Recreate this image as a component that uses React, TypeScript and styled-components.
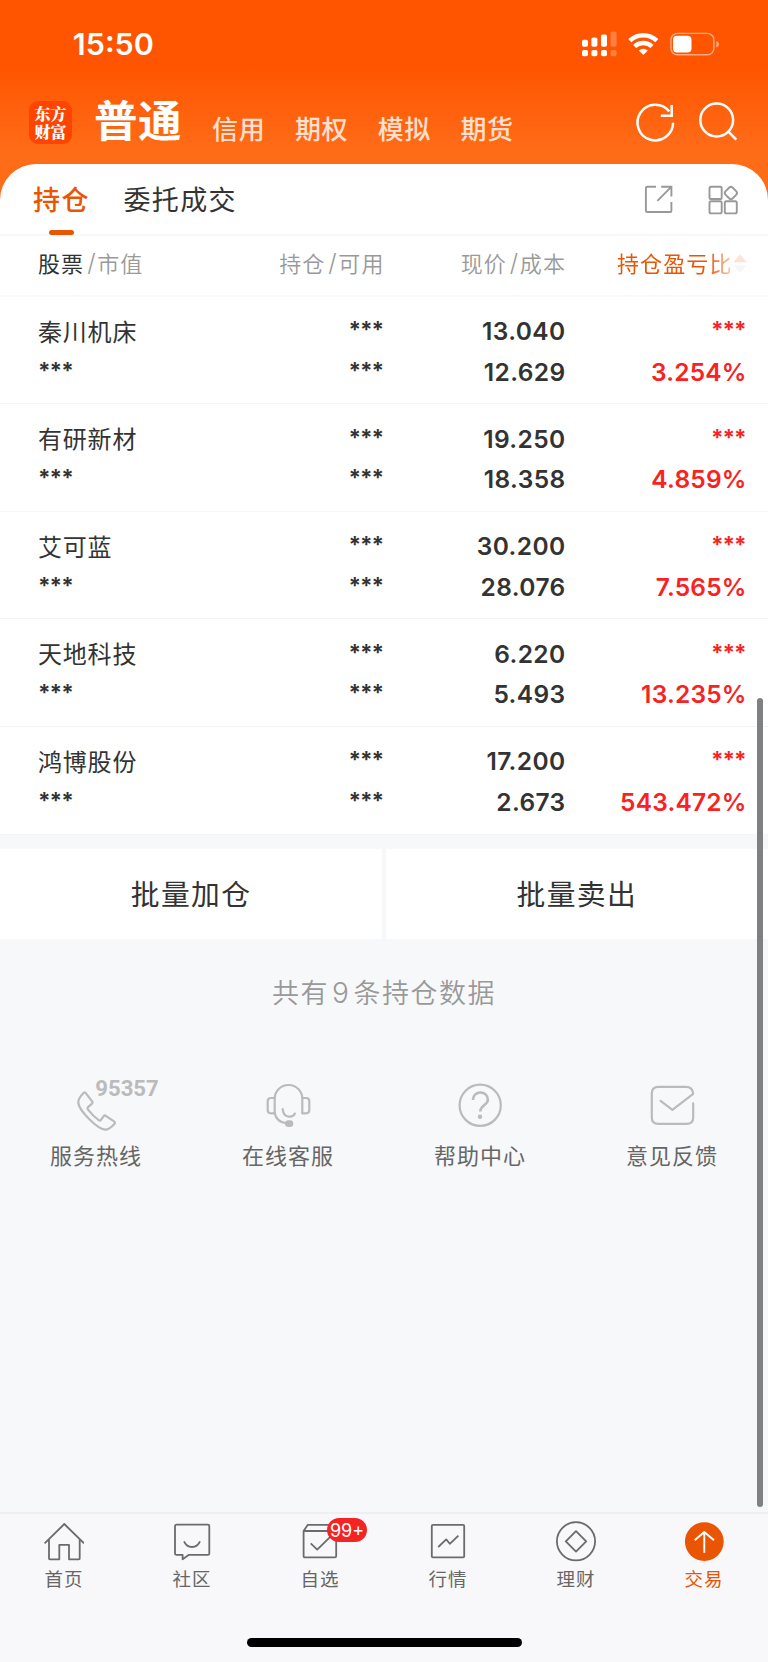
import React from 'react';
import styled, { createGlobalStyle } from 'styled-components';

const CJK = '"Noto Sans CJK SC", sans-serif';
const LATIN = 'Inter, "Noto Sans CJK SC", sans-serif';
const ORANGE = '#ea5504';

const GlobalStyle = createGlobalStyle`
  * { box-sizing: border-box; }
  body { margin: 0; background: #f7f8fa; font-family: ${CJK}; color: #333; }
`;

const Screen = styled.div`
  position: relative;
  display: flex;
  flex-direction: column;
  width: 768px;
  height: 1662px;
  overflow: hidden;
  background: linear-gradient(180deg, #ff5500 0, #ff5500 68px, #ff6c18 150px, #ff6c18 205px, #f7f8fa 205px);
`;

const StatusBar = styled.div`
  display: flex;
  align-items: center;
  justify-content: space-between;
  height: 88px;
  padding: 0 48px 0 72.8px;
`;

const Clock = styled.span`
  font: 600 30.5px/36px ${LATIN};
  color: #fff;
`;

const Header = styled.header`
  display: flex;
  height: 75.5px;
  padding: 13px 28px 0 29px;
`;

const Logo = styled.div`
  width: 43px;
  height: 43px;
  padding: 4px 5px 0 5.5px;
  border-radius: 9px;
  background: #ff4400;
  color: #fff;
  font: 900 16px/17.5px "Noto Serif CJK SC", ${CJK};
  word-break: break-all;
`;

const Market = styled.span<{ $active?: boolean }>`
  font-family: ${CJK};
  font-weight: ${p => (p.$active ? 700 : 500)};
  font-size: ${p => (p.$active ? 43.5 : 26)}px;
  letter-spacing: ${p => (p.$active ? 0.5 : 0.6)}px;
  line-height: 44px;
  color: ${p => (p.$active ? '#fff' : '#ffe0d0')};
`;

const Markets = styled.nav`
  display: flex;
  gap: 29.6px;
  flex: 1;
  margin-left: 22px;

  ${Market} { margin-top: 4.5px; }
  ${Market}:first-child { margin-top: -4px; margin-right: 0.5px; }
`;

const HeaderIcons = styled.div`
  display: flex;
  width: 108px;
`;

const Card = styled.main`
  background: #fff;
  border-radius: 36px 36px 0 0;
`;

const Tabs = styled.div`
  display: flex;
  height: 72.5px;
  padding: 0 28px 0 33px;
  border-bottom: 2px solid #f8f8f8;
`;

const Tab = styled.div<{ $active?: boolean }>`
  display: flex;
  flex-direction: column;
  align-items: center;
  justify-content: space-between;
  height: 71.3px;
  padding-top: 15px;
  margin-right: 33.6px;
  font-size: 27px;
  letter-spacing: 1.4px;
  line-height: 40px;
  font-weight: ${p => (p.$active ? 500 : 400)};
  color: ${p => (p.$active ? ORANGE : '#333')};
`;

const Underline = styled.i`
  width: 25px;
  height: 5px;
  border-radius: 2.5px;
  background: ${ORANGE};
`;

const Tools = styled.div`
  margin-left: auto;
  padding-top: 17px;
`;

const Row = styled.div`
  display: grid;
  grid-template-columns: 160px 185.5px 181.5px 181px;
  height: 107.6px;
  padding: 14.4px 0 0 38px;
  border-bottom: 1.6px solid #f4f5f6;
`;

const HeadRow = styled(Row)`
  height: 60.7px;
  padding-top: 10.2px;
  border-bottom: 2px solid #f8f8f8;
`;

const HeadCell = styled.div<{ $right?: boolean }>`
  display: flex;
  justify-content: ${p => (p.$right ? 'flex-end' : 'flex-start')};
  font-size: 22px;
  letter-spacing: 1.1px;
  line-height: 32px;
  font-weight: 350;
  color: #999;
  white-space: nowrap;
  margin-right: ${p => (p.$right ? '-1px' : '0')};

  b { font-weight: 400; color: #333; }
  i { font: 300 24px/33px ${LATIN}; margin: 0 0.5px 0 3px; }
`;

const SortHead = styled(HeadCell)`
  gap: 0.5px;
  color: ${ORANGE};
  font-weight: 400;

  span {
    mask-image: linear-gradient(90deg, #000 78%, rgba(0, 0, 0, 0.25) 100%);
  }
`;

const Cell = styled.div<{ $red?: boolean; $left?: boolean }>`
  display: flex;
  flex-direction: column;
  align-items: ${p => (p.$left ? 'flex-start' : 'flex-end')};
  color: ${p => (p.$red ? '#f92222' : '#333')};
`;

const Value = styled.span<{ $tight?: boolean }>`
  height: 40.6px;
  font: 600 24.5px/40.6px ${LATIN};
  letter-spacing: ${p => (p.$tight ? 0.2 : 0.4)}px;
  margin-right: -0.6px;
`;

const Name = styled.span`
  height: 40.6px;
  font: 400 24px/32px ${CJK};
  letter-spacing: 0.8px;
  padding-top: 3.6px;
`;

const Mask = styled(Value)`
  font-size: 22.5px;
  font-weight: 650;
  line-height: 38px;
  letter-spacing: -1px;
  margin-right: 0.3px;
`;

const BatchBar = styled.div`
  display: grid;
  grid-template-columns: 1fr 1fr;
  gap: 3.5px;
  padding-top: 14.3px;
  background: #f7f8fa;
`;

const BatchButton = styled.button`
  height: 89.7px;
  padding: 0 0 1px;
  border: 0;
  background: #fff;
  color: #333;
  font: 400 28.8px/40px ${CJK};
  letter-spacing: 1.4px;
`;

const Summary = styled.p`
  margin: 0;
  padding-top: 33.5px;
  text-align: center;
  font-size: 27px;
  line-height: 40px;
  letter-spacing: 1.5px;
  font-weight: 350;
  color: #999;

  span { font-family: ${LATIN}; font-size: 28px; margin: 0 3px; }
`;

const Body = styled.section`
  flex: 1;
  background: #f7f8fa;
`;

const Services = styled.div`
  display: grid;
  grid-template-columns: repeat(4, 1fr);
  padding-top: 66.5px;
`;

const Service = styled.div`
  display: flex;
  flex-direction: column;
  align-items: center;
  gap: 6px;
  color: #666;
  font-size: 22px;
  line-height: 32px;
  letter-spacing: 1px;

  svg { overflow: visible; }
`;

const TabBar = styled.footer`
  display: grid;
  grid-template-columns: repeat(6, 1fr);
  height: 150px;
  padding-top: 6px;
  border-top: 2px solid #eeeff1;
  background: #f8f8fb;
`;

const TabItem = styled.div<{ $active?: boolean }>`
  position: relative;
  display: flex;
  flex-direction: column;
  align-items: center;
  color: ${p => (p.$active ? ORANGE : '#666')};
  font-size: 18.5px;
  line-height: 28px;
  letter-spacing: 1px;

  svg { margin-bottom: 1.5px; }
`;

const Badge = styled.span`
  position: absolute;
  left: 71px;
  top: -2px;
  width: 40px;
  height: 23.5px;
  border-radius: 12px;
  background: #f52424;
  color: #fff;
  text-align: center;
  letter-spacing: 0;
  font: 400 18px/25px ${LATIN};
`;

const ScrollThumb = styled.div`
  position: absolute;
  left: 757px;
  top: 698px;
  width: 5.5px;
  height: 809px;
  border-radius: 3px;
  background: #7f8082;
`;

const HomeIndicator = styled.div`
  position: absolute;
  left: 247px;
  bottom: 15px;
  width: 274.5px;
  height: 9px;
  border-radius: 5px;
  background: #000;
`;

const StatusIcons = () => (
  <svg width="140" height="30" viewBox="580 28.5 140 30" fill="#fff">
    <rect x="582" y="39.3" width="6" height="7" rx="1.8" />
    <rect x="591.4" y="37" width="6" height="9.3" rx="1.8" />
    <rect x="601" y="34" width="6" height="12.3" rx="1.8" />
    <rect x="610.6" y="31" width="6" height="15.3" rx="1.8" opacity=".25" />
    <rect x="582" y="49.4" width="6" height="6.4" rx="1.8" />
    <rect x="591.4" y="49.4" width="6" height="6.4" rx="1.8" />
    <rect x="601" y="49.4" width="6" height="6.4" rx="1.8" />
    <rect x="610.6" y="49.4" width="6" height="6.4" rx="1.8" opacity=".25" />
    <g fill="none" stroke="#fff" strokeWidth="4.4">
      <path d="M629.8 40.2 A19.5 19.5 0 0 1 656.8 40.2" />
      <path d="M634.6 46 A12.6 12.6 0 0 1 652 46" />
    </g>
    <path d="M643.3 54.6 L638.8 50 Q643.3 46.6 647.8 50 Z" />
    <rect x="670.9" y="32.9" width="43" height="21.4" rx="6.5" fill="none" stroke="#fff" strokeWidth="1.4" opacity=".5" />
    <rect x="673" y="35.2" width="18.5" height="16.7" rx="4" />
    <path d="M716.3 40.5 Q719 41.6 719 43.8 Q719 46 716.3 47.1 Z" opacity=".5" />
  </svg>
);

const RefreshSearch = () => (
  <svg width="108" height="44" viewBox="632 101 108 44" fill="none" stroke="#fff" strokeWidth="2.5">
    <path d="M673.1 122.8 A17.8 17.8 0 1 1 669.3 111.6" />
    <path d="M671.7 105 V115.7 H660.8" />
    <circle cx="716.7" cy="120" r="16.4" />
    <path d="M728.3 131.6 L736.3 139.6" />
  </svg>
);

const ToolIcons = () => (
  <svg width="100" height="34" viewBox="640 181 100 34" fill="none" stroke="#999" strokeWidth="1.9">
    <path d="M656 186.8 H647.2 Q645.9 186.8 645.9 188.1 V210.7 Q645.9 212 647.2 212 H670.1 Q671.4 212 671.4 210.7 V202" />
    <path d="M661.2 186.8 H671.4 V196.6 M671 187.2 L657.4 200.8" />
    <rect x="709.5" y="186.8" width="12.2" height="12.2" rx="1.6" />
    <rect x="709.5" y="201.2" width="12.2" height="12.2" rx="1.6" />
    <rect x="724.8" y="201.2" width="12" height="12.2" rx="1.6" />
    <rect x="725.9" y="188" width="10" height="10" rx="2.6" transform="rotate(45 730.9 193)" />
  </svg>
);

const SortIcon = () => (
  <svg width="14" height="32" viewBox="0 0 14 32">
    <path d="M0.3 16.2 L7 8.5 L13.7 16.2 Z" fill="#fde3d6" />
    <path d="M0.3 19.2 L7 26.8 L13.7 19.2 Z" fill="#f5f6f7" />
  </svg>
);

const serviceStroke = {
  fill: 'none', stroke: '#bbb', strokeWidth: 2.2, strokeLinecap: 'round', strokeLinejoin: 'round',
} as const;

const PhoneIcon = () => (
  <svg width="128" height="52" viewBox="32 1080 128 52" {...serviceStroke}>
    <path d="M85.6 1092.9 L92.3 1101.6 Q93 1102.7 92 1103.6 L87.8 1107.4 Q87 1108.4 87.8 1109.4 Q93 1116.2 99 1120.4 Q100 1121 100.8 1120.1 L103.8 1116 Q104.7 1115.1 105.8 1115.8 L114 1121.4 Q115.6 1122.6 114.4 1123.9 Q109.3 1129.6 105 1129.6 C97 1128.8 79.5 1111 78.3 1103 Q78 1098.6 83.7 1092.8 Q84.8 1092 85.6 1092.9 Z" />
    <text x="95.2" y="1096.2" textLength="63.6" lengthAdjust="spacingAndGlyphs" fill="#bbb" stroke="none"
      fontFamily="Roboto, sans-serif" fontWeight="700" fontSize="22.5" letterSpacing="0">95357</text>
  </svg>
);

const HeadsetIcon = () => (
  <svg width="48" height="52" viewBox="0 0 48 52" {...serviceStroke}>
    <path d="M10.7 33 V18.5 A13.6 13.6 0 0 1 24.3 5 H24.8 A13.6 13.6 0 0 1 38.3 18.5 V33" />
    <path d="M10.7 18 H7 Q3.7 18 3.7 21.3 V30 Q3.7 33.3 7 33.3 H10.7" />
    <path d="M38.3 18 H42 Q45.3 18 45.3 21.3 V30 Q45.3 33.3 42 33.3 H38.3" />
    <path d="M10.7 33 Q12.5 42 22 43.2" />
    <rect x="22.2" y="41.3" width="6" height="4.6" rx="2.2" fill="#bbb" />
    <path d="M18.7 29 C19 38 28.5 38.4 30.9 33.6" />
  </svg>
);

const HelpIcon = () => (
  <svg width="48" height="52" viewBox="0 0 48 52" {...serviceStroke}>
    <circle cx="24.2" cy="25.3" r="20.6" />
    <path d="M16.9 20 C17 10 32 10 31.9 20 C31.6 25 24.3 25.5 24.3 31.6" strokeLinecap="butt" strokeWidth="2.6" />
    <circle cx="24" cy="36.7" r="2.2" fill="#bbb" stroke="none" />
  </svg>
);

const FeedbackIcon = () => (
  <svg width="48" height="52" viewBox="0 0 48 52" {...serviceStroke}>
    <path d="M45.2 23.4 V37.3 Q45.2 43.9 38.6 43.9 H10.4 Q3.8 43.9 3.8 37.3 V13.4 Q3.8 6.8 10.4 6.8 H38 Q44.6 6.8 45.2 13.8 L24.4 29.8 L12.6 20.8" />
  </svg>
);

const NavSvg = ({ children }: { children: React.ReactNode }) => (
  <svg width="40" height="42" viewBox="0 0 40 42" fill="none" stroke="#6b6b6b" strokeWidth="1.8" strokeLinejoin="round">
    {children}
  </svg>
);

const holdings = [
  ['秦川机床', '13.040', '12.629', '3.254%'],
  ['有研新材', '19.250', '18.358', '4.859%'],
  ['艾可蓝', '30.200', '28.076', '7.565%'],
  ['天地科技', '6.220', '5.493', '13.235%'],
  ['鸿博股份', '17.200', '2.673', '543.472%'],
];

const services = [
  { label: '服务热线', icon: <PhoneIcon /> },
  { label: '在线客服', icon: <HeadsetIcon /> },
  { label: '帮助中心', icon: <HelpIcon /> },
  { label: '意见反馈', icon: <FeedbackIcon /> },
];

const navItems = [
  { label: '首页', icon: <><path d="M.6 23.3 L20.3 4 L40 23.3" /><path d="M5 19.6 V38.4 Q5 39.3 5.9 39.3 H15.3 V24.8 H25 V39.3 H34.8 Q35.7 39.3 35.7 38.4 V19.6" /></> },
  { label: '社区', icon: <><path d="M4.5 4.7 H35.8 Q37.3 4.7 37.3 6.2 V33.4 Q37.3 34.8 35.8 34.8 H17 L10.6 39.2 V34.8 H4.5 Q3 34.8 3 33.4 V6.2 Q3 4.7 4.5 4.7 Z" /><path d="M12 21.3 Q14.5 27 20 27 Q25.5 27 28 21.3" /></> },
  { label: '自选', badge: '99+', icon: <><path d="M3.6 11 H36.2 V36 Q36.2 37.4 34.8 37.4 H5 Q3.6 37.4 3.6 36 Z" /><path d="M3.6 11 L7.8 4.8 H32 L36.2 11" /><path d="M10.7 23.4 L17.2 29.6 L30 17.2" /></> },
  { label: '行情', icon: <><rect x="3.8" y="4.8" width="32.4" height="32.6" rx="1.2" /><path d="M10.2 27 L18.2 19.4 L21.8 23.8 L30.4 15.7" /></> },
  { label: '理财', icon: <><circle cx="20" cy="21.3" r="19.1" /><path d="M20 11.2 L30.2 21.3 L20 31.6 L9.8 21.3 Z" /></> },
  { label: '交易', active: true, icon: <><circle cx="20.3" cy="21.6" r="19.4" fill={ORANGE} stroke="none" /><path d="M20.3 32.8 V12 M10.7 20.2 L20.3 12 L30 20.2" stroke="#fff" strokeWidth="1.9" /></> },
];

export default function App() {
  return (
    <Screen>
      <GlobalStyle />
      <StatusBar>
        <Clock>15:50</Clock>
        <StatusIcons />
      </StatusBar>
      <Header>
        <Logo>东方财富</Logo>
        <Markets>
          <Market $active>普通</Market>
          {['信用', '期权', '模拟', '期货'].map(m => <Market key={m}>{m}</Market>)}
        </Markets>
        <HeaderIcons><RefreshSearch /></HeaderIcons>
      </Header>
      <Card>
        <Tabs>
          <Tab $active>持仓<Underline /></Tab>
          <Tab>委托成交</Tab>
          <Tools><ToolIcons /></Tools>
        </Tabs>
        <HeadRow>
          <HeadCell><b>股票</b><i>/</i>市值</HeadCell>
          <HeadCell $right>持仓<i>/</i>可用</HeadCell>
          <HeadCell $right>现价<i>/</i>成本</HeadCell>
          <SortHead $right><span>持仓盈亏比</span><SortIcon /></SortHead>
        </HeadRow>
        {holdings.map(([name, price, cost, ratio]) => (
          <Row key={name}>
            <Cell $left><Name>{name}</Name><Mask>***</Mask></Cell>
            <Cell><Mask>***</Mask><Mask>***</Mask></Cell>
            <Cell><Value>{price}</Value><Value>{cost}</Value></Cell>
            <Cell $red><Mask>***</Mask><Value $tight>{ratio}</Value></Cell>
          </Row>
        ))}
        <BatchBar>
          <BatchButton>批量加仓</BatchButton>
          <BatchButton>批量卖出</BatchButton>
        </BatchBar>
      </Card>
      <Body>
        <Summary>共有<span>9</span>条持仓数据</Summary>
        <Services>
          {services.map(s => <Service key={s.label}>{s.icon}{s.label}</Service>)}
        </Services>
      </Body>
      <TabBar>
        {navItems.map(n => (
          <TabItem key={n.label} $active={n.active}>
            <NavSvg>{n.icon}</NavSvg>
            {n.badge && <Badge>{n.badge}</Badge>}
            {n.label}
          </TabItem>
        ))}
      </TabBar>
      <ScrollThumb />
      <HomeIndicator />
    </Screen>
  );
}
